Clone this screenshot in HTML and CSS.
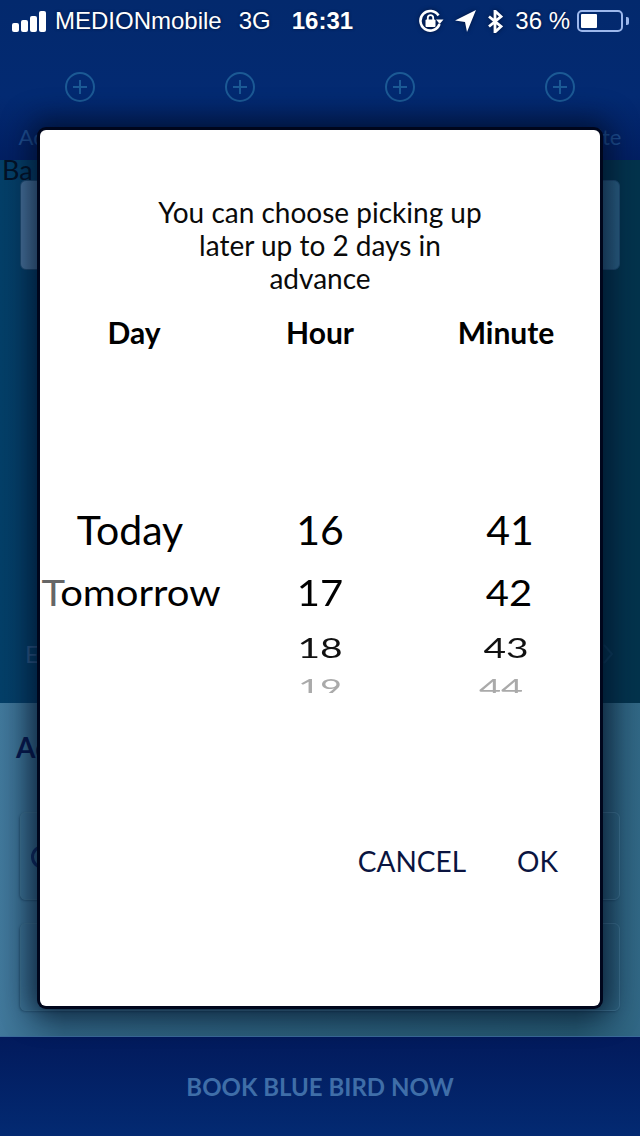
FILE: index.html
```html
<!DOCTYPE html>
<html lang="en">
<head>
    <meta charset="UTF-8">
    <meta name="viewport" content="width=device-width, initial-scale=1.0">
    <title>Book Blue Bird</title>
    <link rel="stylesheet" href="styles.css">
</head>
<body>
    <div class="page">
        <div class="top-area">
            <div class="status-bar">
                <div class="status-left">
                    <div class="signal"><i></i><i></i><i></i><i></i></div>
                    <span class="carrier">MEDIONmobile</span>
                    <span class="net">3G</span>
                    <span class="clock">16:31</span>
                </div>
                <div class="status-right">
                    <svg class="st-icon lock" width="25" height="24" viewBox="0 0 25 24">
                        <path d="M19.500 6.500A9.800 9.800 0 1 0 20.500 15" fill="none" stroke="#fff" stroke-width="2.600"/>
                        <path d="M17 10.500h7.500L20.700 15z" fill="#fff"/>
                        <rect x="6.500" y="10.500" width="10" height="7.500" rx="1" fill="#fff"/>
                        <path d="M8.800 11V8.800a2.700 2.700 0 0 1 5.400 0V11" fill="none" stroke="#fff" stroke-width="1.800"/>
                    </svg>
                    <svg class="st-icon loc" width="21" height="22" viewBox="0 0 21 22">
                        <path d="M21 0L0 10.500l10 1.500 2 10z" fill="#fff"/>
                    </svg>
                    <svg class="st-icon bt" width="16" height="23" viewBox="0 0 16 23">
                        <path d="M2 6.500l12 10-6 5.500V1l6 5.500-12 10" fill="none" stroke="#fff" stroke-width="2.800"/>
                    </svg>
                    <span class="battery-text">36 %</span>
                    <div class="battery"><div class="battery-fill"></div></div>
                    <div class="battery-tip"></div>
                </div>
            </div>
            <div class="actions">
                <div class="action">
                    <svg class="plus" width="32" height="32" viewBox="0 0 32 32"><circle cx="16" cy="16" r="14" /><path d="M16 9v14M9 16h14"/></svg>
                    <span>Add Favorite</span>
                </div>
                <div class="action">
                    <svg class="plus" width="32" height="32" viewBox="0 0 32 32"><circle cx="16" cy="16" r="14" /><path d="M16 9v14M9 16h14"/></svg>
                </div>
                <div class="action">
                    <svg class="plus" width="32" height="32" viewBox="0 0 32 32"><circle cx="16" cy="16" r="14" /><path d="M16 9v14M9 16h14"/></svg>
                </div>
                <div class="action">
                    <svg class="plus" width="32" height="32" viewBox="0 0 32 32"><circle cx="16" cy="16" r="14" /><path d="M16 9v14M9 16h14"/></svg>
                    <span>Add Favorite</span>
                </div>
            </div>
        </div>

        <div class="booking-area">
            <div class="booking-title">Ba</div>
            <div class="booking-box"></div>
            <div class="booking-foot">
                <span>E</span>
                <svg class="chev" width="12" height="22" viewBox="0 0 12 22"><path d="M2 2l8 9-8 9"/></svg>
            </div>
        </div>

        <div class="address-area">
            <div class="address-title">Ad</div>
            <div class="address-box"><span class="address-icon"></span></div>
            <div class="address-box"></div>
        </div>

        <div class="book-bar">BOOK BLUE BIRD NOW</div>
    </div>

    <div class="dialog">
        <p class="dialog-text">You can choose picking up<br>later up to 2 days in<br>advance</p>
        <div class="picker">
            <div class="picker-col day">
                <div class="col-head">Day</div>
                <div class="wheel">
                    <div class="w-item w-first">Today</div>
                    <div class="w-item w-second"><span class="faded-t">T</span>omorrow</div>
                </div>
            </div>
            <div class="picker-col">
                <div class="col-head">Hour</div>
                <div class="wheel">
                    <div class="w-item w-first">16</div>
                    <div class="w-item w-second">17</div>
                    <div class="w-item w-third">18</div>
                    <div class="w-item w-fourth"><span>19</span></div>
                </div>
            </div>
            <div class="picker-col minute">
                <div class="col-head">Minute</div>
                <div class="wheel">
                    <div class="w-item w-first">41</div>
                    <div class="w-item w-second">42</div>
                    <div class="w-item w-third">43</div>
                    <div class="w-item w-fourth"><span>44</span></div>
                </div>
            </div>
        </div>
        <div class="dialog-buttons">
            <span>CANCEL</span>
            <span>OK</span>
        </div>
    </div>
</body>
</html>
```

FILE: styles.css
```css
* {
    box-sizing: border-box;
}

body {
    margin: 0;
    width: 640px;
    height: 1136px;
    overflow: hidden;
    position: relative;
    font-family: Lato, "Liberation Sans", sans-serif;
    background: #022a5c;
}

.page {
    width: 640px;
    height: 1136px;
    display: flex;
    flex-direction: column;
}

/* top */
.top-area {
    height: 160px;
    background: linear-gradient(#03296d, #032a72 60%, #021f62);
}

.status-bar {
    height: 42px;
    padding: 0 11px 0 12px;
    display: flex;
    justify-content: space-between;
    align-items: center;
    color: #fff;
    font-family: "Liberation Sans", sans-serif;
    font-size: 24px;
    text-shadow: 0 0 3px #00123a;
}

.status-left,
.status-right {
    display: flex;
    align-items: center;
}

.signal {
    display: flex;
    align-items: flex-end;
    gap: 2px;
    height: 21px;
    margin-right: 9px;
}

.signal i {
    display: block;
    width: 7px;
    background: #fff;
    border-radius: 2px;
}

.signal i:nth-child(1) { height: 9px; }
.signal i:nth-child(2) { height: 12px; }
.signal i:nth-child(3) { height: 16px; }
.signal i:nth-child(4) { height: 21px; }

.net {
    margin-left: 17px;
}

.clock {
    margin-left: 21px;
    font-weight: bold;
}

.st-icon {
    filter: drop-shadow(0 0 2px #00123a);
}

.lock {
    margin-right: 11px;
}

.loc {
    margin-right: 11px;
}

.bt {
    margin-right: 12px;
}

.battery {
    width: 46px;
    height: 22px;
    margin-left: 7px;
    padding: 2px;
    border: 2px solid #9db8ec;
    border-radius: 5px;
}

.battery-fill {
    width: 16px;
    height: 100%;
    background: #fff;
    border-radius: 1px;
}

.battery-tip {
    width: 3px;
    height: 8px;
    margin-left: 3px;
    background: #9db8ec;
    border-radius: 0 2px 2px 0;
}

.actions {
    display: grid;
    grid-template-columns: repeat(4, 160px);
    padding-top: 29px;
}

.action {
    display: flex;
    flex-direction: column;
    align-items: center;
    gap: 20px;
    font-size: 22px;
    color: #1f4f92;
    white-space: nowrap;
}

.plus {
    fill: none;
    stroke: #1c5a95;
    stroke-width: 2;
}

/* middle */
.booking-area {
    height: 543px;
    background: linear-gradient(90deg, #043f68, #03345a 50%, #03334c);
    padding: 0 20px;
}

.booking-title {
    margin-left: -18px;
    font-size: 27px;
    line-height: 20px;
    color: #031226;
}

.booking-box {
    height: 90px;
    background: linear-gradient(90deg, #47729a, #2a5f82);
    border-radius: 6px;
    border: 1px solid #1f4c72;
}

.booking-foot {
    display: flex;
    justify-content: space-between;
    align-items: center;
    margin-top: 372px;
    padding: 0 6px 0 5px;
    font-size: 24px;
    line-height: 24px;
    color: #2d5a88;
}

.chev {
    fill: none;
    stroke: #0d3e5c;
    stroke-width: 2;
}

/* lower */
.address-area {
    height: 333px;
    padding: 27px 20px 0;
    background: linear-gradient(90deg, #41789b, #2f6280 10%, #24566e 90%, #316785);
}

.address-title {
    margin-left: -4px;
    font-size: 28px;
    font-weight: bold;
    line-height: 34px;
    color: #07184d;
    margin-bottom: 48px;
}

.address-box {
    height: 88px;
    margin-bottom: 23px;
    border: 1px solid #3f7390;
    border-radius: 6px;
    padding: 32px 0 0 10px;
    box-shadow: -1px 1px 2px rgba(10, 40, 70, 0.35);
}

.address-icon {
    display: block;
    width: 24px;
    height: 24px;
    border: 3px solid #0f2a62;
    border-radius: 50%;
}

.book-bar {
    height: 100px;
    line-height: 100px;
    text-align: center;
    font-size: 24px;
    font-weight: bold;
    color: #3f6ea8;
    background: linear-gradient(#021a5c, #032a72);
    border-top: 1px solid #3a6a9a;
}

/* dialog */
.dialog {
    position: absolute;
    left: 40px;
    top: 130px;
    width: 560px;
    height: 876px;
    padding-top: 66px;
    background: #fff;
    border-radius: 6px;
    box-shadow: 0 0 0 3px #00061c, 0 0 28px 10px rgba(0, 12, 35, 0.72);
    color: #000;
}

.dialog-text {
    margin: 0;
    text-align: center;
    font-size: 28px;
    line-height: 33px;
    color: #0a0a0a;
}

.picker {
    display: grid;
    grid-template-columns: 188px 184px 188px;
    margin-top: 20px;
}

.picker-col {
    text-align: center;
}

.col-head {
    font-size: 30px;
    font-weight: bold;
    line-height: 34px;
    margin-bottom: 149px;
}

.wheel {
    font-size: 41px;
}

.w-item {
    height: 63px;
    line-height: 63px;
    white-space: nowrap;
}

.w-second {
    font-size: 40px;
    transform: scaleY(0.93);
}

.w-third {
    height: 46px;
    line-height: 46px;
    transform: scaleY(0.7);
    font-size: 39px;
    color: #111;
}

.w-fourth {
    height: 16px;
    margin-top: 7px;
    overflow: hidden;
    color: #aaa;
    font-size: 38px;
}

.w-fourth span {
    display: block;
    line-height: 30px;
    transform: scaleY(0.62);
    transform-origin: top;
}

.day .w-first {
    transform: translateX(-4px);
}

.day .w-second {
    transform: translateX(-3px) scaleY(0.93);
}

.faded-t {
    color: #666;
}

.minute .w-first {
    transform: translateX(4px);
}

.minute .w-second {
    transform: translateX(3px) scaleY(0.93);
}

.minute .w-fourth {
    transform: translateX(-5px);
}

.dialog-buttons {
    position: absolute;
    right: 42px;
    top: 715px;
    display: flex;
    gap: 51px;
    font-size: 28px;
    line-height: 32px;
    color: #0a1440;
}
```
